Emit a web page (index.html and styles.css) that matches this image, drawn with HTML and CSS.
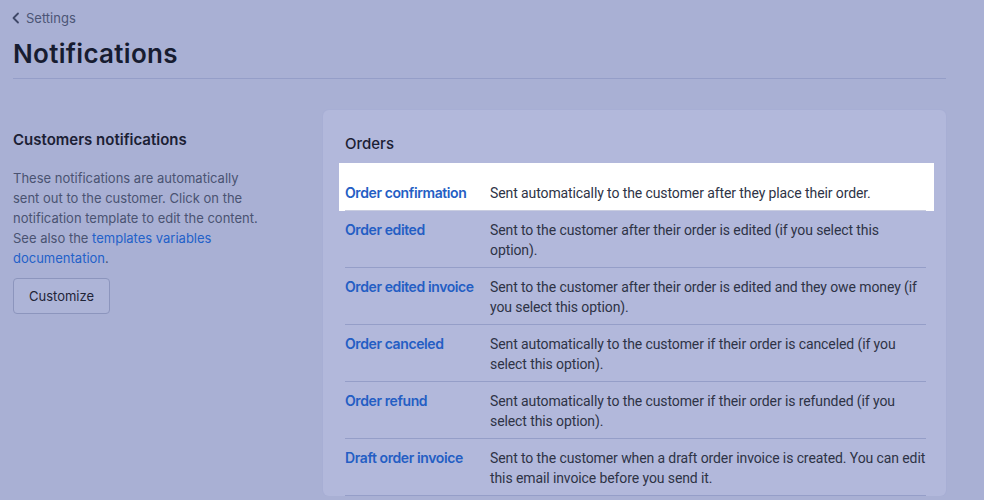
FILE: index.html
```html
<!DOCTYPE html>
<html lang="en">
<head>
<meta charset="utf-8">
<title>Notifications</title>
<link rel="stylesheet" href="styles.css">
</head>
<body>
<div class="page">
  <header class="header">
    <a class="back" href="#">
      <svg class="chev" width="8" height="12" viewBox="0 0 8 12"><path d="M6 1.5 1.5 6 6 10.5" fill="none" stroke="currentColor" stroke-width="1.8" stroke-linecap="round" stroke-linejoin="round"/></svg>
      <span>Settings</span>
    </a>
    <h1 class="title">Notifications</h1>
  </header>
  <div class="layout">
    <section class="aside">
      <h2 class="aside-title">Customers notifications</h2>
      <p class="aside-text">These notifications are automatically sent out to the customer. Click on the notification template to edit the content. See also the <a href="#" class="link">templates variables documentation</a>.</p>
      <button class="btn">Customize</button>
    </section>
    <section class="card">
      <h3 class="card-title">Orders</h3>
      <div class="rows">
        <div class="hl">
          <div class="row first">
            <a href="#" class="name">Order confirmation</a>
            <div class="desc">Sent automatically to the customer after they place their order.</div>
          </div>
        </div>
        <div class="row">
          <a href="#" class="name">Order edited</a>
          <div class="desc">Sent to the customer after their order is edited (if you select this option).</div>
        </div>
        <div class="row">
          <a href="#" class="name">Order edited invoice</a>
          <div class="desc">Sent to the customer after their order is edited and they owe money (if you select this option).</div>
        </div>
        <div class="row">
          <a href="#" class="name">Order canceled</a>
          <div class="desc">Sent automatically to the customer if their order is canceled (if you select this option).</div>
        </div>
        <div class="row">
          <a href="#" class="name">Order refund</a>
          <div class="desc">Sent automatically to the customer if their order is refunded (if you select this option).</div>
        </div>
        <div class="row">
          <a href="#" class="name">Draft order invoice</a>
          <div class="desc">Sent to the customer when a draft order invoice is created. You can edit this email invoice before you send it.</div>
        </div>
      </div>
    </section>
  </div>
</div>
</body>
</html>
```
FILE: styles.css
```css
html, body {
  margin: 0;
  padding: 0;
  background: #a9b0d4;
  font-family: Inter, "Noto Sans", sans-serif;
  font-size: 13px;
  line-height: 20px;
  color: #2b3044;
  overflow: hidden;
}
.page {
  width: 933px;
  padding: 0 0 0 13px;
}
.header {
  border-bottom: 1px solid #959ec8;
  padding-top: 8px;
  padding-bottom: 8px;
}
.back {
  display: flex;
  align-items: center;
  gap: 6px;
  margin-left: -1px;
  color: #4c5576;
  text-decoration: none;
  height: 20px;
}
.chev { color: #3f4868; }
.title {
  margin: 10px 0 0;
  font-size: 26px;
  line-height: 32px;
  font-weight: 600;
  color: #171c30;
  letter-spacing: 0.3px;
}
.layout {
  display: grid;
  grid-template-columns: 310px 1fr;
  padding-top: 31px;
}
.aside { padding-top: 18px; }
.aside-title {
  margin: 0;
  font-size: 15px;
  line-height: 24px;
  font-weight: 600;
  color: #1b2034;
}
.aside-text {
  margin: 16px 0 0;
  width: 248px;
  color: #4a5372;
}
.link { color: #2361c9; text-decoration: none; }
.btn {
  margin-top: 10px;
  height: 36px;
  padding: 0 15px;
  font: inherit;
  color: #1f2438;
  background: #adb4d7;
  border: 1px solid #8c95bd;
  border-radius: 4px;
}
.card {
  background: #b2b8db;
  border-radius: 6px;
  padding: 23px 20px 0 22px;
  box-shadow: 0 0 0 1px #a7aed4;
}
.card-title {
  margin: 0;
  font-size: 15px;
  line-height: 22px;
  font-weight: 500;
  color: #1b2034;
}
.rows { margin-top: 8px; }
.hl {
  background: #ffffff;
  margin: 0 -8px 0 -6px;
  padding: 11px 8px 0 6px;
}
.row {
  display: grid;
  grid-template-columns: 145px 1fr;
  padding: 9px 0 7px;
  border-bottom: 1px solid #959ec8;
  font-size: 14px;
}
.row.first { border-bottom-color: #c9cde0; }
.name {
  color: #245ec4;
  font-weight: 600;
  text-decoration: none;
  letter-spacing: -0.4px;
}
.desc {
  font-family: Roboto, Inter, sans-serif;
  color: #2e3346;
  letter-spacing: -0.1px;
}
```
